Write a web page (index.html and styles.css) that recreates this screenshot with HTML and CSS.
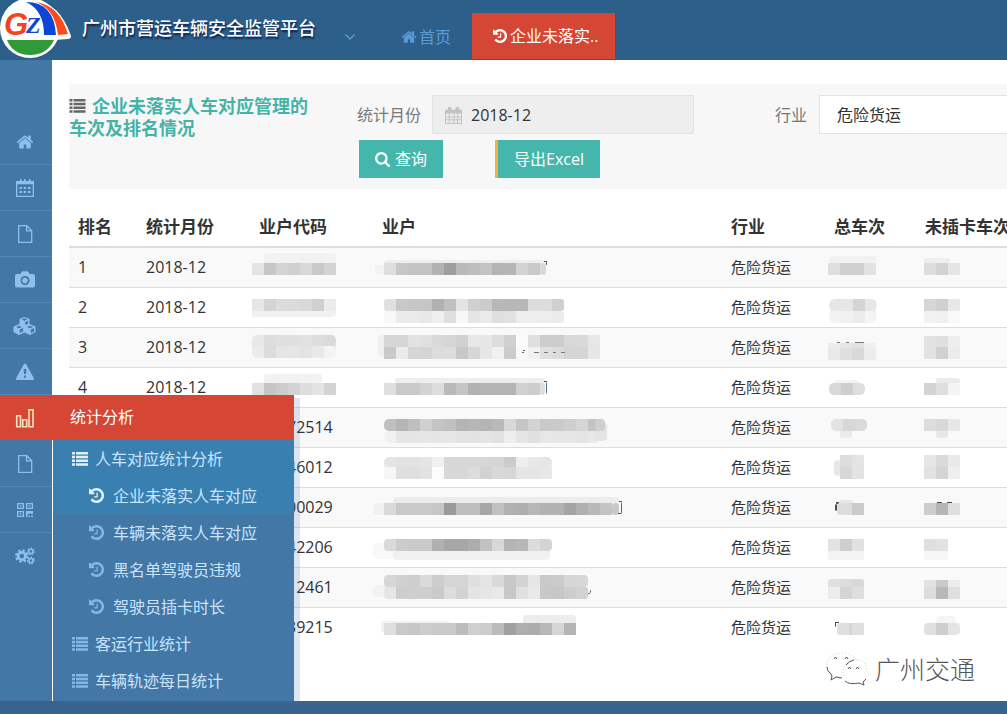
FILE: index.html
```html
<!DOCTYPE html>
<html lang="zh-CN">
<head>
<meta charset="utf-8">
<meta name="viewport" content="width=device-width, initial-scale=1">
<title>广州市营运车辆安全监管平台</title>
<link rel="stylesheet" href="styles.css">
</head>
<body>
<svg class="sprite" aria-hidden="true">
  <symbol id="i-home" viewBox="0 0 1792 1792"><path d="M1472 992v480q0 26-19 45t-45 19h-384v-384h-256v384h-384q-26 0-45-19t-19-45v-480q0-1 .5-3t.5-3l575-474 575 474q1 2 1 6zm223-69l-62 74q-8 9-21 11h-3q-13 0-21-7l-692-577-692 577q-12 8-24 7-13-2-21-11l-62-74q-8-10-7-23.5t11-21.5l719-599q32-26 76-26t76 26l244 204v-195q0-14 9-23t23-9h192q14 0 23 9t9 23v408l219 182q10 8 11 21.5t-7 23.5z"/></symbol>
  <symbol id="i-history" viewBox="128 128 1536 1536"><path d="M1664 896q0 156-61 298t-164 245-245 164-298 61q-172 0-327-72.5t-264-204.5q-7-10-6.5-22.5t8.5-20.5l137-138q10-9 25-9 16 2 23 12 73 95 179 147t225 52q104 0 198.5-40.5t163.5-109.5 109.5-163.5 40.5-198.5-40.5-198.5-109.5-163.5-163.5-109.5-198.5-40.5q-98 0-188 35.5t-160 101.5l137 138q31 30 14 69-17 40-59 40h-448q-26 0-45-19t-19-45v-448q0-42 40-59 39-17 69 14l130 129q107-101 244.5-156.5t284.5-55.5q156 0 298 61t245 164 164 245 61 298zm-640-288v448q0 14-9 23t-23 9h-320q-14 0-23-9t-9-23v-64q0-14 9-23t23-9h224v-352q0-14 9-23t23-9h64q14 0 23 9t9 23z"/></symbol>
  <symbol id="i-search" viewBox="64 128 1664 1664"><path d="M1216 832q0-185-131.5-316.5t-316.5-131.5-316.5 131.5-131.5 316.5 131.5 316.5 316.5 131.5 316.5-131.5 131.5-316.5zm512 832q0 52-38 90t-90 38q-54 0-90-38l-343-342q-179 124-399 124-143 0-273.5-55.5t-225-150-150-225-55.5-273.5 55.5-273.5 150-225 225-150 273.5-55.5 273.5 55.5 225 150 150 225 55.5 273.5q0 220-124 399l343 343q37 37 37 90z"/></symbol>
  <symbol id="i-list" viewBox="0 0 16 14"><path d="M0 0h3v2.500H0zM4 0h12v2.500H4zM0 3.700h3v2.500H0zM4 3.700h12v2.500H4zM0 7.500h3V10H0zM4 7.500h12V10H4zM0 11.200h3v2.500H0zM4 11.200h12v2.500H4z"/></symbol>
  <symbol id="i-calendar" viewBox="0 0 20 20"><path fill-rule="evenodd" d="M1 3h4V1h1.500v2H9V1h1.500v2H14V1h1.500v2H19v16H1zM2.300 6.300v11.500h15.400V6.300zM4.500 9h2.500v2H4.500zM8.700 9h2.500v2H8.700zM13 9h2.500v2H13zM4.500 13h2.500v2H4.500zM8.700 13h2.500v2H8.700zM13 13h2.500v2H13z"/></symbol>
  <symbol id="i-date" viewBox="0 0 18 18"><path fill-rule="evenodd" d="M0 3h3V1l1-1h2l1 1v2h4V1l1-1h2l1 1v2h3v15H0zM1 7v3h3V7zM5 7v3h4V7zM10 7v3h3V7zM14 7v3h3V7zM1 11v2h3v-2zM5 11v2h4v-2zM10 11v2h3v-2zM14 11v2h3v-2zM1 14v3h3v-3zM5 14v3h4v-3zM10 14v3h3v-3zM14 14v3h3v-3z"/></symbol>
  <symbol id="i-file" viewBox="0 0 20 20"><path class="line" d="M3.700 1.700h8l5 5v11.600h-13zM11.500 1.700v5.200h5.200"/></symbol>
  <symbol id="i-camera" viewBox="0 0 20 20"><path fill-rule="evenodd" d="M2 4h3.500l1-2q.4-.8 1.500-.8h4q1 0 1.500.8l1 2H18q2 0 2 2v9.500q0 2-2 2H2q-2 0-2-2V6q0-2 2-2zM10 6a4.500 4.500 0 1 0 .1 0zM10 7.700a2.900 2.900 0 1 1-.1 0z"/></symbol>
  <symbol id="i-cubes" viewBox="0 0 22 20"><path fill-rule="evenodd" d="M11 1l5 2v5l6 2.500v5.500l-5.500 3-5.500-2.500L5.500 19 0 16v-5.500L6 8V3zM8 3.500l3 1.300 3-1.300-3-1.200zM11.800 6v3l2.800-1.300v-3zM2.500 11l3 1.300 3-1.300-3-1.200zM6.300 13.500v3.500L9.600 15.500V12zM13.500 11l3 1.300 3-1.300-3-1.200zM17.300 13.500v3.500l3.300-1.500V12z"/></symbol>
  <symbol id="i-warn" viewBox="0 0 20 20"><path fill-rule="evenodd" d="M10 1.500q.8 0 1.200.8L19 16.500q.7 1.500-1 1.500H2q-1.700 0-1-1.500L8.800 2.300q.4-.8 1.200-.8zM8.600 7l.4 5h2l.4-5zM9 13.500v2.200h2v-2.200z"/></symbol>
  <symbol id="i-chart" viewBox="0 0 20 20"><path class="line bold" d="M1.700 7.700h3.800v11H1.700zM7.700 11.700h4v7h-4zM14 1.700h4v17h-4z"/></symbol>
  <symbol id="i-qr" viewBox="0 0 16 16"><path fill-rule="evenodd" d="M0 1h7v6H0zM1.300 2.300v3.400h4.400V2.300zM2.800 3.300h1.500v1.500H2.800zM9 1h7v6H9zM10.300 2.300v3.400h4.400V2.300zM11.800 3.300h1.500v1.500h-1.500zM0 9h7v6H0zM1.300 10.300v3.400h4.400v-3.400zM2.800 11.300h1.500v1.500H2.800zM9 9h7v3h-2.500v-1h-1v1h-2v3H9zM11.500 13.500H13V15h-1.500zM14 13.500h2V15h-2z"/></symbol>
  <symbol id="i-cogs" viewBox="0 0 22 20">
    <circle class="gear" cx="7.500" cy="10" r="4"/><circle class="teeth" cx="7.500" cy="10" r="6.200"/>
    <circle class="gear-s" cx="17.500" cy="5" r="2.300"/><circle class="teeth-s" cx="17.500" cy="5" r="3.500"/>
    <circle class="gear-s" cx="17.500" cy="15" r="2.300"/><circle class="teeth-s" cx="17.500" cy="15" r="3.500"/>
  </symbol>
</svg>

<header class="topbar">
  <svg class="logo" viewBox="0 0 72 60" role="img" aria-label="GZ">
    <circle cx="30" cy="28" r="30" fill="#fff"/>
    <path d="M34 0q26 3 37 36 0 3-3 3l-14 1L30 40z" fill="#fff"/>
    <path d="M7 40h47q-7 15-24 15T7 40z" fill="#2f9a37"/>
    <path d="M26 2q28 0 30 33H44Q44 10 26 2z" fill="#0b46d6"/>
    <path d="M36 2q23 3 32 32l-10 1Q55 9 36 2z" fill="#ff4a1c"/>
    <text class="logo-g" x="4" y="35">G</text><text class="logo-z" x="26" y="33">Z</text>
  </svg>
  <h1 class="brand">广州市营运车辆安全监管平台</h1>
  <button class="toggle" type="button" aria-label="展开"><svg viewBox="0 0 10 6"><path class="line" d="M.5.500 5 5 9.500.500"/></svg></button>
  <nav class="tabs">
    <a class="tab" href="#"><svg class="icon"><use href="#i-home"/></svg>首页</a>
    <a class="tab tab-on" href="#"><svg class="icon"><use href="#i-history"/></svg>企业未落实..</a>
  </nav>
</header>

<div class="shell">
  <aside class="sidebar">
    <ul class="rail">
      <li><a href="#" aria-label="首页"><svg class="home"><use href="#i-home"/></svg></a></li>
      <li><a href="#" aria-label="日历"><svg><use href="#i-calendar"/></svg></a></li>
      <li><a href="#" aria-label="文件"><svg><use href="#i-file"/></svg></a></li>
      <li><a href="#" aria-label="拍照"><svg><use href="#i-camera"/></svg></a></li>
      <li><a href="#" aria-label="模块"><svg class="wide"><use href="#i-cubes"/></svg></a></li>
      <li><a href="#" aria-label="报警"><svg><use href="#i-warn"/></svg></a></li>
      <li class="open"><a href="#" aria-label="统计"><svg><use href="#i-chart"/></svg></a>
        <div class="flyout">
          <h2>统计分析</h2>
          <ul class="menu">
            <li class="on"><a href="#"><svg class="m-list"><use href="#i-list"/></svg>人车对应统计分析</a></li>
            <li class="on sub"><a href="#"><svg class="m-hist"><use href="#i-history"/></svg>企业未落实人车对应</a></li>
            <li class="sub"><a href="#"><svg class="m-hist"><use href="#i-history"/></svg>车辆未落实人车对应</a></li>
            <li class="sub"><a href="#"><svg class="m-hist"><use href="#i-history"/></svg>黑名单驾驶员违规</a></li>
            <li class="sub"><a href="#"><svg class="m-hist"><use href="#i-history"/></svg>驾驶员插卡时长</a></li>
            <li><a href="#"><svg class="m-list"><use href="#i-list"/></svg>客运行业统计</a></li>
            <li><a href="#"><svg class="m-list"><use href="#i-list"/></svg>车辆轨迹每日统计</a></li>
          </ul>
        </div>
      </li>
      <li><a href="#" aria-label="报表"><svg><use href="#i-file"/></svg></a></li>
      <li><a href="#" aria-label="二维码"><svg class="small"><use href="#i-qr"/></svg></a></li>
      <li class="last"><a href="#" aria-label="设置"><svg><use href="#i-cogs"/></svg></a></li>
    </ul>
  </aside>

  <main class="content">
    <section class="filter">
      <h2 class="title"><svg><use href="#i-list"/></svg>企业未落实人车对应管理的车次及排名情况</h2>
      <form class="form">
        <div class="fields">
          <label for="month">统计月份</label>
          <span class="datebox"><svg><use href="#i-date"/></svg><input id="month" type="text" value="2018-12" readonly></span>
          <label class="second" for="trade">行业</label>
          <select id="trade"><option>危险货运</option></select>
        </div>
        <div class="actions">
          <button class="btn" type="button"><svg><use href="#i-search"/></svg>查询</button>
          <button class="btn btn-export" type="button">导出Excel</button>
        </div>
      </form>
    </section>

    <table class="grid">
      <colgroup><col class="c-rank"><col class="c-month"><col class="c-code"><col><col class="c-trade"><col class="c-total"><col class="c-miss"></colgroup>
      <thead><tr><th>排名</th><th>统计月份</th><th>业户代码</th><th>业户</th><th>行业</th><th>总车次</th><th>未插卡车次</th></tr></thead>
      <tbody>
        <tr><td>1</td><td>2018-12</td>
          <td class="m"><svg data-m="14,5,72,12,f2;2,15,0:e4 c6 d4 d0 d8 c9 d3"></svg></td>
          <td class="m"><svg data-m="2,17,160,9,f2;11,12,162,14,ee;11,15,0:de c7 c4 c4 b2 9e b9 bd c3 b4 b5 d3 c9;167,15,6,12,d8;171,13,3,1,555;173,14,1,3,555"></svg></td>
          <td class="trade">危险货运</td>
          <td class="m"><svg data-m="5,8,46,8,f1;3,15,0:de d0 d0 e2"></svg></td>
          <td class="m"><svg data-m="8,10,26,6,ee;8,15,0:dd d2 e5"></svg></td></tr>
        <tr><td>2</td><td>2018-12</td>
          <td class="m"><svg data-m="2,20,84,9,f1;2,11,0:e6 d4 dc db d9 d0 eb"></svg></td>
          <td class="m"><svg data-m="11,23,3:f8 eb eb e8 ef df f7 e5 ea de e1 ee ee ed eb;11,11,3:e0 c8 c6 c6 b1 c0 e4 d0 cc b8 b7 b7 dd dd cf"></svg></td>
          <td class="trade">危险货运</td>
          <td class="m"><svg data-m="5,13,46,21,ef;4,11,6:e6 e6 d4 e7;4,23,6:f2 f1 ec f4"></svg></td>
          <td class="m"><svg data-m="8,11,0:d6 d0 e8;8,23,0:f2 f0 f9"></svg></td></tr>
        <tr><td>3</td><td>2018-12</td>
          <td class="m"><svg data-m="2,9,84,18,e8;2,7,5:e8 dd df df e1 dd da;2,18,5:ec dc e5 e6 e3 e9 f4"></svg></td>
          <td class="m"><svg data-m="5,7,30,22,f0;11,7,0:d6 d6 e2 e0 d9 d6 d1 e7 e6 dd d0 fb df cc cc d8 d9 e7;11,19,0:c9 eb d6 d5 dc dd c8 d6 e7 f1 cc;155,19,0:f1 e0 dc d5 d5 e6;150,22,2,1,555;149,24,2,1,666;161,24,5,1,777;171,24,4,1,777;180,24,3,1,777;188,24,4,1,777"></svg></td>
          <td class="trade">危险货运</td>
          <td class="m"><svg data-m="12,14,3,1,777;21,14,3,1,777;30,14,9,1,777;3,15,0:ec e6 e2 ef;3,20,0:e9 df d9 ec"></svg></td>
          <td class="m"><svg data-m="8,8,0:e2 df ee;8,19,0:e2 d0 ec"></svg></td></tr>
        <tr><td>4</td><td>2018-12</td>
          <td class="m"><svg data-m="14,6,58,9,f2;2,15,0:e1 c5 cc d3 dd e3 d3"></svg></td>
          <td class="m"><svg data-m="22,10,150,8,ee;11,15,0:df ca ca d3 dd b9 c5 b2 b4 b5 b4 d1 cd;167,15,5,12,dd;171,13,3,1,555;173,14,1,12,468"></svg></td>
          <td class="trade">危险货运</td>
          <td class="m"><svg data-m="10,12,24,8,f3;4,15,5:d8 cf de"></svg></td>
          <td class="m"><svg data-m="20,10,24,8,eb;8,15,0:d3 de f4"></svg></td></tr>
        <tr><td></td><td></td><td class="tail">72514</td>
          <td class="m"><svg data-m="11,23,5:f1 e5 e5 e6 e5 e6 e3 e2 e4 e1 ee e5 e0 e7 e6 e6 e4 e8;220,14,14,19,e4;11,11,5:bf b5 bf d0 c4 c1 b4 b6 b4 b9 d8 c5 d3 c9 ca ce d5 c4;222,11,10,12,cf"></svg></td>
          <td class="trade">危险货运</td>
          <td class="m"><svg data-m="15,22,12,8,eb;6,11,5:e3 d7 da"></svg></td>
          <td class="m"><svg data-m="20,22,12,8,e8;8,11,0:dc d8 e7"></svg></td></tr>
        <tr><td></td><td></td><td class="tail">46012</td>
          <td class="m"><svg data-m="11,9,5:e5 e2 e3 e5 f0 d7 d7 d7 d6 d5 cb ee e8 e6;11,19,0:f6 df df e3 fc d8 d8 dd d2 d9 d6 e5 e5 e7"></svg></td>
          <td class="trade">危险货运</td>
          <td class="m"><svg data-m="9,12,20,16,e8;15,7,0:dd e4;15,19,0:d7 e3"></svg></td>
          <td class="m"><svg data-m="8,7,0:e6 da e9;8,19,0:e2 d4 ef"></svg></td></tr>
        <tr><td></td><td></td><td class="tail">00029</td>
          <td class="m"><svg data-m="0,15,40,12,f1;20,9,226,18,ec;11,15,0:da c9 c9 c9 c6 9a be bd a7 c0 b1 af b7 b2 b2 a4 b0 b8 c4;239,15,7,12,c9;246,13,3,1,555;248,14,1,12,468;245,25,3,1,555"></svg></td>
          <td class="trade">危险货运</td>
          <td class="m"><svg data-m="10,16,2,7,544;11,14,3,2,544;14,12,14,8,e6;12,15,3:dd db;27,15,0:cb"></svg></td>
          <td class="m"><svg data-m="21,14,5,1,444;31,14,5,1,444;8,15,0:cd b5 df"></svg></td></tr>
        <tr><td></td><td></td><td class="tail">42206</td>
          <td class="m"><svg data-m="0,15,70,16,f8;20,20,157,12,f0;11,11,4:da cc ca ca b0 a7 a7 ad c2 d8 b4 b7 dc d4"></svg></td>
          <td class="trade">危险货运</td>
          <td class="m"><svg data-m="3,22,36,10,f3;3,11,0:e2 ce e1"></svg></td>
          <td class="m"><svg data-m="8,22,24,10,f7;8,11,0:df e2"></svg></td></tr>
        <tr><td></td><td></td><td class="tail">12461</td>
          <td class="m"><svg data-m="0,17,60,12,f2;11,7,4:d7 d0 ce da cc d5 d5 df e4 d9 c8 d3 e6 c9 cb d6 d7;11,19,3:e6 ce cf ce ca dc d3 e4 e6 e9 c8 e0 e9 c8 c7 cd d2;217,22,1,3,666;215,25,2,1,666"></svg></td>
          <td class="trade">危险货运</td>
          <td class="m"><svg data-m="3,11,3:df dc d8;3,19,0:ec d5 de"></svg></td>
          <td class="m"><svg data-m="8,12,0:e1 ca ec;8,19,0:dc b9 df"></svg></td></tr>
        <tr><td></td><td></td><td class="tail">39215</td>
          <td class="m"><svg data-m="8,13,70,12,f2;150,7,53,16,ec;11,15,0:de c9 c6 cc c9 ca bc cf cd bb a0 ae ac b7 d5 b5"></svg></td>
          <td class="trade">危险货运</td>
          <td class="m"><svg data-m="10,14,4,1,544;10,14,1,5,544;12,15,3:df d5;27,15,0:df"></svg></td>
          <td class="m"><svg data-m="20,8,20,12,f5;8,15,4:e0 ce e4"></svg></td></tr>
      </tbody>
    </table>

    <div class="watermark">
      <svg viewBox="0 0 42 36"><path class="halo" d="M6 24Q0 20 1 13 3 2 16 2q12 1 14 8M18 25q-4-13 10-16 13-1 13 12"/><path class="line" d="M1 16q0 4 4 7l1 2-1 4 5-3 6 1M19 30q4 4 14 2l5 2-1-3 3-3M20 14q3-4 8-5M8 8l1.500-2L11 8M19 8l1.500-2L22 8M22 18l1.500-2 1.500 2M30 18l1.500-2 1.500 2"/></svg>
      <span>广州交通</span>
    </div>
  </main>
</div>
<footer class="footer"></footer>
<script src="masks.js"></script>
</body>
</html>
```
FILE: styles.css
```css
* { box-sizing: border-box; }

body {
  margin: 0;
  min-height: 100vh;
  display: flex;
  flex-direction: column;
  overflow-x: hidden;
  background: #fff;
  color: #333;
  font: 16px/20px "Open Sans", "Noto Sans CJK SC", sans-serif;
}

h1, h2, ul { margin: 0; padding: 0; }
ul { list-style: none; }
a { color: inherit; text-decoration: none; }
button, input, select { font: inherit; border: 0; border-radius: 0; }
svg { fill: currentColor; flex: none; }
.sprite { position: absolute; width: 0; height: 0; }
.line { fill: none; stroke: currentColor; stroke-width: 1.3px; }
.bold { stroke-width: 1.6px; }

.topbar {
  height: 60px;
  display: flex;
  align-items: center;
  background: #2c608b;
}
.logo { width: 72px; height: 60px; margin-right: 10px; }
.logo-g, .logo-z { font-style: italic; font-weight: bold; }
.logo-g { font-family: "Liberation Sans", sans-serif; font-size: 31px; fill: #f4431c; }
.logo-z { font-family: "Liberation Serif", serif; font-size: 24px; fill: #1248c8; }
.brand {
  font-size: 18px;
  font-weight: 500;
  line-height: 56px;
  align-self: flex-start;
  color: #fff;
  white-space: nowrap;
  text-shadow: 1px 2px 2px #0a1d4a;
}
.toggle {
  width: 10px;
  height: 8px;
  padding: 0;
  margin: 15px 46px 0 29px;
  display: flex;
  background: none;
  color: #5b9bd5;
}
.toggle svg { width: 10px; height: 6px; }
.tabs { display: flex; align-self: flex-end; margin-bottom: 1px; }
.tab {
  height: 46px;
  display: flex;
  align-items: center;
  gap: 2px;
  color: #5b9bd5;
  white-space: nowrap;
}
.tab:first-child { width: 71px; padding-top: 2px; }
.tab .icon { width: 16px; height: 16px; }
.tab-on { background: #d54634; color: #fff; padding: 0 17px 0 21px; gap: 3px; }
.tab-on .icon { width: 14px; height: 14px; }

.shell { flex: 1; display: flex; }
.sidebar { width: 52px; flex: none; padding-top: 59px; background: #4277a6; }
.rail > li { height: 46px; border-bottom: 1px solid #5389b8; position: relative; color: #8fc0ec; }
.rail > li > a { height: 45px; display: flex; align-items: center; justify-content: center; padding-right: 3px; }
.rail svg { width: 20px; height: 20px; }
.rail svg.small { width: 16px; height: 16px; }
.rail svg.home { width: 18px; height: 18px; }
.rail svg.wide { width: 23px; }
.rail > .last { border-bottom: 0; }
.rail > .open { background: #d54634; color: #ffe3c0; border-color: #4277a6; z-index: 2; }
.gear { fill: none; stroke: currentColor; stroke-width: 3px; }
.teeth { fill: none; stroke: currentColor; stroke-width: 2.4px; stroke-dasharray: 2.6 2.270; }
.gear-s { fill: none; stroke: currentColor; stroke-width: 1.6px; }
.teeth-s { fill: none; stroke: currentColor; stroke-width: 1.6px; stroke-dasharray: 1.6 1.540; }

.flyout {
  position: absolute;
  top: 0;
  left: 52px;
  width: 242px;
  box-shadow: 6px 3px 0 rgba(66, 119, 176, .18);
  color: #c9e4ff;
}
.flyout h2 {
  height: 45px;
  padding-left: 18px;
  background: #d54634;
  color: #fff;
  font-size: 16px;
  font-weight: 400;
  line-height: 45px;
}
.menu { padding-bottom: 2px; background: #4277a6; border-left: 1px solid #fff; }
.menu a { height: 37px; display: flex; align-items: center; padding-left: 19px; white-space: nowrap; }
.menu .on { background: #3980b0; }
.menu .sub a { padding-left: 36px; }
.menu svg { color: #85b7e6; }
.menu .on svg { color: #e2f1ff; }
.menu .m-list { width: 16px; height: 14px; margin-right: 7px; }
.menu .m-hist { width: 15px; height: 15px; margin-right: 9px; }

.content {
  flex: 1;
  min-width: 0;
  overflow: hidden;
  position: relative;
  padding: 24px 0 53px 17px;
}
.filter {
  display: flex;
  height: 105px;
  padding-top: 11px;
  background: #f7f7f7;
}
.title {
  width: 246px;
  margin-right: 42px;
  flex: none;
  color: #45b3a8;
  font-size: 18px;
  font-weight: 700;
  line-height: 22px;
}
.title svg { width: 17px; height: 14px; margin-right: 6px; color: #666; }
.form { flex: none; }
.fields { display: flex; align-items: center; color: #777; }
.fields label { margin-right: 11px; }
.fields .second { margin: 0 12px 0 81px; }
.datebox { position: relative; display: flex; }
.datebox svg { position: absolute; left: 13px; top: 12px; width: 17px; height: 17px; color: #c2c2c2; }
input, select { width: 262px; height: 39px; border: 1px solid #e2e2e2; color: #333; }
input { background: #eee; padding: 0 12px 0 38px; }
select { appearance: none; background: #fff; padding: 0 17px; }
.actions { display: flex; gap: 52px; padding: 6px 0 0 2px; }
.btn {
  height: 38px;
  padding: 0 16px;
  display: flex;
  align-items: center;
  gap: 5px;
  background: #45b6ac;
  color: #fff;
}
.btn svg { width: 15px; height: 15px; }
.btn-export { border-left: 3px solid #f5b041; }

.grid { width: 100%; margin-top: 16px; table-layout: fixed; border-collapse: separate; border-spacing: 0; }
.c-rank { width: 68px; }
.c-month { width: 113px; }
.c-code { width: 123px; }
.c-trade { width: 103px; }
.c-total { width: 91px; }
.c-miss { width: 91px; }
.grid th {
  height: 43px;
  padding: 2px 0 0 9px;
  border-bottom: 2px solid #ddd;
  font-size: 17px;
  font-weight: 700;
  text-align: left;
  white-space: nowrap;
}
.grid td { height: 40px; padding: 0 0 2px 9px; border-bottom: 1px solid #ddd; }
.grid tr:nth-child(odd) td { background: #f9f9f9; }
.grid tbody tr:last-child td { border-bottom-color: #fff; background: #fff; }
.grid .trade { font-size: 15px; }
.grid .tail { padding-left: 37px; }
.grid .m { padding: 0; }
.m svg { display: block; width: 100%; height: 39px; }

.watermark {
  position: absolute;
  right: 32px;
  bottom: 14px;
  display: flex;
  align-items: center;
  gap: 7px;
  color: #555;
  font-size: 25px;
  font-weight: 300;
  line-height: 34px;
}
.watermark svg { width: 42px; height: 36px; }
.watermark .line { stroke-width: 1px; }
.halo { fill: none; stroke: #ccc; stroke-width: 1px; stroke-dasharray: 1 2; }

.footer { height: 13px; background: #38638c; }
```
FILE: masks.js
```js
// Paints the privacy mosaics. Each entry is either a plain block
// "x,y,width,height,shade" or a strip of 12px tiles "x,y,radius:shade shade ...".
const NS = "http://www.w3.org/2000/svg";
const TILE = 12;

function shade(s) {
  return s.length === 2 ? "#" + s + s + s : "#" + s;
}

function make(name, attrs, parent) {
  const el = document.createElementNS(NS, name);
  for (const key in attrs) el.setAttribute(key, attrs[key]);
  parent.appendChild(el);
  return el;
}

let clips = 0;
document.querySelectorAll("svg[data-m]").forEach(svg => {
  svg.dataset.m.split(";").forEach(entry => {
    const [head, tiles] = entry.split(":");
    const n = head.split(",");
    if (!tiles) {
      make("rect", { x: n[0], y: n[1], width: n[2], height: n[3], rx: Math.min(4, n[3] / 3), fill: shade(n[4]) }, svg);
      return;
    }
    const list = tiles.split(" ");
    const id = "clip" + clips++;
    const clip = make("clipPath", { id }, svg);
    make("rect", { x: n[0], y: n[1], width: list.length * TILE, height: TILE, rx: n[2] }, clip);
    const group = make("g", { "clip-path": "url(#" + id + ")" }, svg);
    list.forEach((s, i) => {
      make("rect", { x: +n[0] + i * TILE, y: n[1], width: TILE, height: TILE, fill: shade(s) }, group);
    });
  });
});
```
